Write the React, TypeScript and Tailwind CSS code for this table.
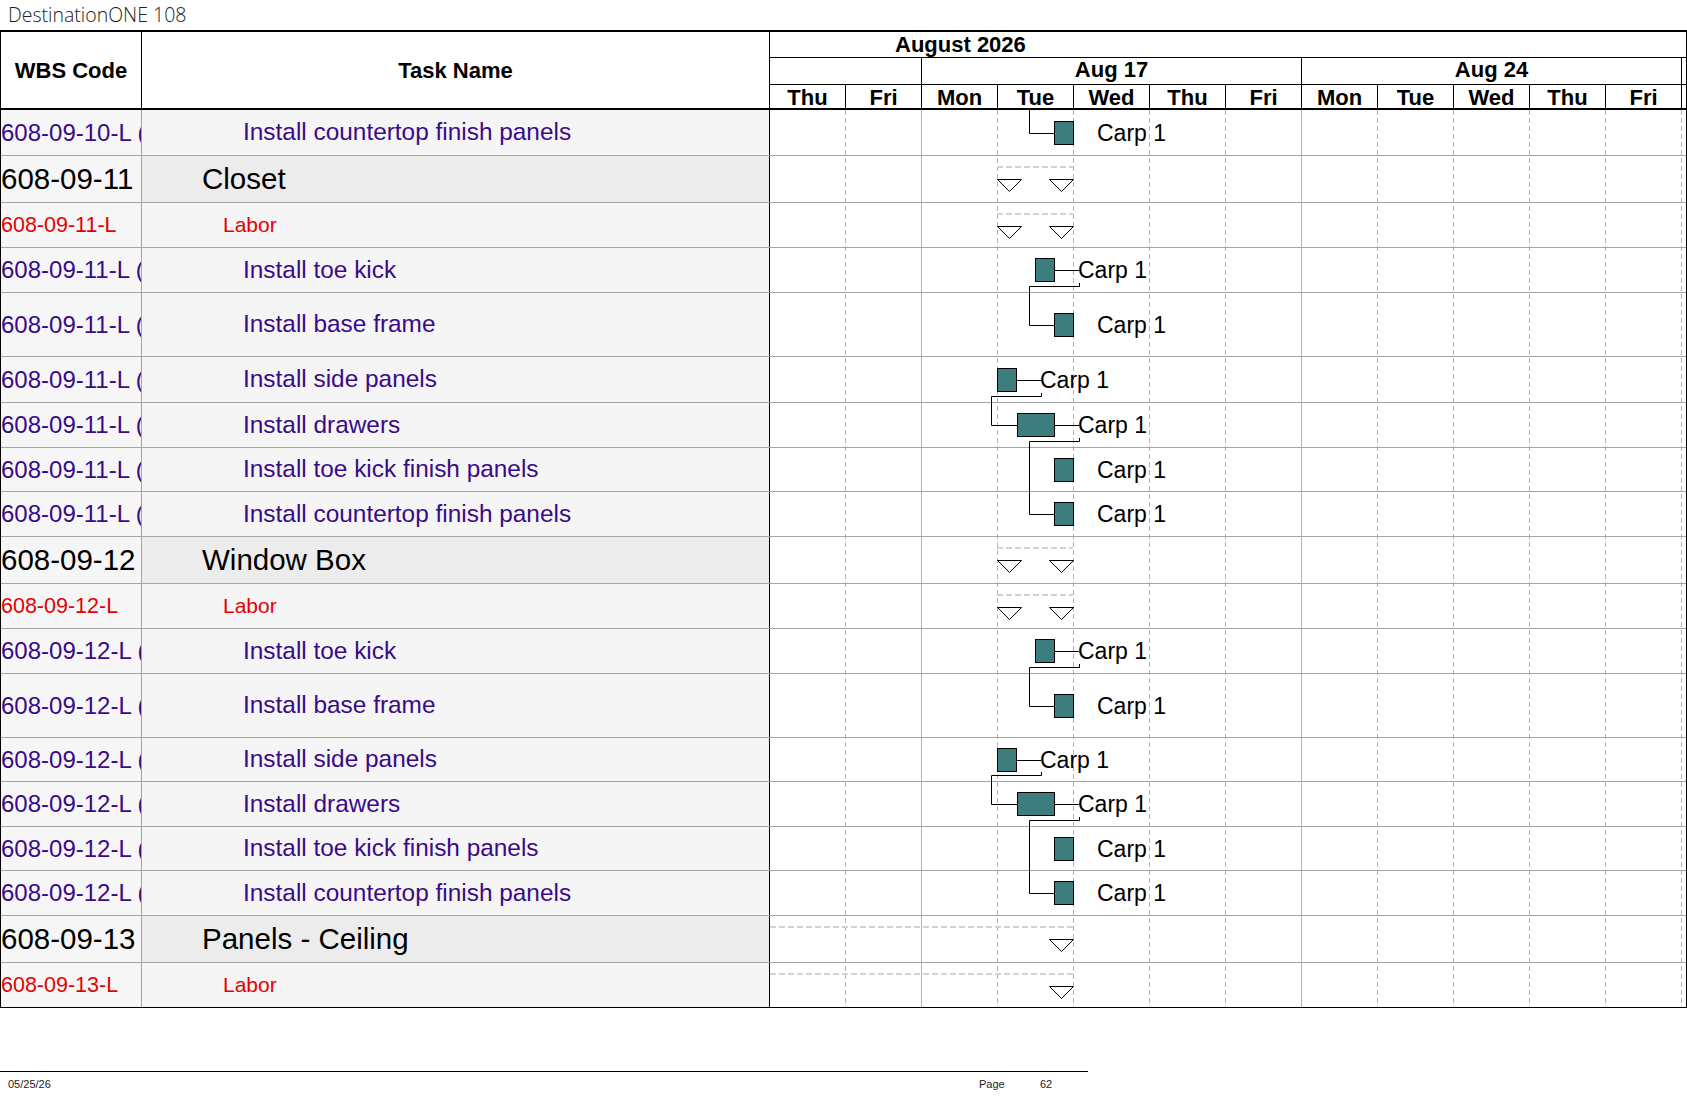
import React from 'react';

type Kind = 'task' | 'group' | 'labor';

type Chart =
  | { bar: [number, number]; label: number; lead?: number }
  | { tris: number[]; dash: [number, number] };

interface Row {
  wbs: string;
  name: string;
  kind: Kind;
  h: number;
  hCls: string;
  chart?: Chart;
}

// chart x values are in svg coordinates (page x - 770)
const LATE: Chart = { bar: [284, 303], label: 327 };
const TOE: Chart = { bar: [265, 284], label: 308, lead: 309 };
const SIDE: Chart = { bar: [227, 246], label: 270, lead: 271 };
const DRAW: Chart = { bar: [247, 284], label: 308, lead: 309 };
const SUM: Chart = { tris: [227, 279], dash: [227, 303] };
const SUM_WIDE: Chart = { tris: [279], dash: [0, 303] };

const rows: Row[] = [
  { wbs: '608-09-10-L (', name: 'Install countertop finish panels', kind: 'task', h: 46, hCls: 'h-[46px]', chart: LATE },
  { wbs: '608-09-11', name: 'Closet', kind: 'group', h: 47, hCls: 'h-[47px]', chart: SUM },
  { wbs: '608-09-11-L', name: 'Labor', kind: 'labor', h: 45, hCls: 'h-[45px]', chart: SUM },
  { wbs: '608-09-11-L (', name: 'Install toe kick', kind: 'task', h: 45, hCls: 'h-[45px]', chart: TOE },
  { wbs: '608-09-11-L (', name: 'Install base frame', kind: 'task', h: 64, hCls: 'h-[64px]', chart: LATE },
  { wbs: '608-09-11-L (', name: 'Install side panels', kind: 'task', h: 46, hCls: 'h-[46px]', chart: SIDE },
  { wbs: '608-09-11-L (', name: 'Install drawers', kind: 'task', h: 45, hCls: 'h-[45px]', chart: DRAW },
  { wbs: '608-09-11-L (', name: 'Install toe kick finish panels', kind: 'task', h: 44, hCls: 'h-[44px]', chart: LATE },
  { wbs: '608-09-11-L (', name: 'Install countertop finish panels', kind: 'task', h: 45, hCls: 'h-[45px]', chart: LATE },
  { wbs: '608-09-12', name: 'Window Box', kind: 'group', h: 47, hCls: 'h-[47px]', chart: SUM },
  { wbs: '608-09-12-L', name: 'Labor', kind: 'labor', h: 45, hCls: 'h-[45px]', chart: SUM },
  { wbs: '608-09-12-L (', name: 'Install toe kick', kind: 'task', h: 45, hCls: 'h-[45px]', chart: TOE },
  { wbs: '608-09-12-L (', name: 'Install base frame', kind: 'task', h: 64, hCls: 'h-[64px]', chart: LATE },
  { wbs: '608-09-12-L (', name: 'Install side panels', kind: 'task', h: 44, hCls: 'h-[44px]', chart: SIDE },
  { wbs: '608-09-12-L (', name: 'Install drawers', kind: 'task', h: 45, hCls: 'h-[45px]', chart: DRAW },
  { wbs: '608-09-12-L (', name: 'Install toe kick finish panels', kind: 'task', h: 44, hCls: 'h-[44px]', chart: LATE },
  { wbs: '608-09-12-L (', name: 'Install countertop finish panels', kind: 'task', h: 45, hCls: 'h-[45px]', chart: LATE },
  { wbs: '608-09-13', name: 'Panels - Ceiling', kind: 'group', h: 47, hCls: 'h-[47px]', chart: SUM_WIDE },
  { wbs: '608-09-13-L', name: 'Labor', kind: 'labor', h: 44, hCls: 'h-[44px]', chart: SUM_WIDE },
];

// dependency links: from row -> to row
const links = [
  { from: 3, to: 4, x: 259, end: 309, target: 284 },
  { from: 5, to: 6, x: 221, end: 271, target: 247 },
  { from: 6, to: 8, x: 259, end: 309, target: 284 },
  { from: 11, to: 12, x: 259, end: 309, target: 284 },
  { from: 13, to: 14, x: 221, end: 271, target: 247 },
  { from: 14, to: 16, x: 259, end: 309, target: 284 },
];

const days = ['Thu', 'Fri', 'Mon', 'Tue', 'Wed', 'Thu', 'Fri', 'Mon', 'Tue', 'Wed', 'Thu', 'Fri'];

const CHART_W = 916;
const CHART_H = rows.reduce((s, r) => s + r.h, 0);

const tops: number[] = [];
{
  let acc = 0;
  rows.forEach((r) => {
    tops.push(acc);
    acc += r.h;
  });
}
const inner = (i: number) => rows[i].h - (i === rows.length - 1 ? 0 : 1);
const mid = (i: number) => tops[i] + inner(i) / 2;

const nameCls: Record<Kind, string> = {
  task: 'bg-[#f5f5f5] pl-[101px] text-[24.4px] text-[#3a0a88]',
  group: 'bg-[#ececec] pl-[60px] text-[29.5px] text-black',
  labor: 'bg-[#f5f5f5] pl-[81px] text-[21px] text-[#e60000]',
};

const wbsCls: Record<Kind, string> = {
  task: 'text-[24px] text-[#3a0a88]',
  group: 'text-[29.5px] text-black',
  labor: 'text-[21.5px] text-[#e60000]',
};

function GanttBody() {
  return (
    <svg width={CHART_W} height={CHART_H} className="block shrink-0" fontFamily="'Liberation Sans', Arial, sans-serif">
      {/* day grid */}
      {days.map((_, k) => {
        const x = 75.5 + 76 * k;
        const solid = k === 1 || k === 6;
        return (
          <line
            key={k}
            x1={x}
            x2={x}
            y1={0}
            y2={CHART_H}
            stroke="#b4b4b4"
            strokeWidth={1}
            strokeDasharray={solid ? undefined : '5 3'}
          />
        );
      })}
      {/* row lines */}
      {rows.slice(0, -1).map((r, i) => {
        const y = tops[i] + r.h - 0.5;
        return <line key={i} x1={0} x2={CHART_W} y1={y} y2={y} stroke="#a4a4a4" strokeWidth={1} />;
      })}

      {/* links */}
      <path d={`M259.5 0 V${Math.round(mid(0)) + 0.5} H284`} fill="none" stroke="black" strokeWidth={1} />
      {links.map((l, i) => {
        const yOut = tops[l.from] + rows[l.from].h - 1 - 6;
        const yt = Math.round(mid(l.to));
        return (
          <path
            key={i}
            d={`M${l.end + 0.5} ${yOut - 3} V${yOut + 0.5} H${l.x + 0.5} V${yt + 0.5} H${l.target}`}
            fill="none"
            stroke="black"
            strokeWidth={1}
          />
        );
      })}

      {rows.map((r, i) => {
        const c = r.chart;
        if (!c) return null;
        if ('tris' in c) {
          const dy = tops[i] + 11;
          const ty = tops[i] + 23;
          return (
            <g key={i}>
              <line x1={c.dash[0]} x2={c.dash[1]} y1={dy} y2={dy} stroke="#d2d2d2" strokeWidth={2} strokeDasharray="6 3" />
              {c.tris.map((x) => (
                <polygon
                  key={x}
                  points={`${x + 0.5},${ty + 0.5} ${x + 24.5},${ty + 0.5} ${x + 12.5},${ty + 12.5}`}
                  fill="white"
                  stroke="black"
                  strokeWidth={1}
                />
              ))}
            </g>
          );
        }
        const m = mid(i);
        const yTop = Math.round(m - 12);
        const yc = Math.round(m) + 0.5;
        return (
          <g key={i}>
            {c.lead && <line x1={c.bar[1] + 1} x2={c.lead} y1={yc} y2={yc} stroke="black" strokeWidth={1} />}
            <rect
              x={c.bar[0] + 0.5}
              y={yTop + 0.5}
              width={c.bar[1] - c.bar[0]}
              height={23}
              fill="#3e7d7d"
              stroke="black"
              strokeWidth={1}
            />
            <text x={c.label} y={m + 8} fontSize={23} fill="black">
              Carp 1
            </text>
          </g>
        );
      })}
    </svg>
  );
}

export default function App() {
  return (
    <div className="w-[1687px] h-[1097px] bg-white font-['Liberation_Sans',Arial,sans-serif] text-black overflow-hidden">
      {/* Title */}
      <div className="h-[30px] pl-[8px] pt-[3px] font-['Open_Sans',sans-serif] font-light text-[19.5px] leading-[24px] text-[#222]">
        DestinationONE 108
      </div>

      {/* Table */}
      <div className="w-[1687px] border-t-2 border-l border-r border-b border-black">
        {/* Header */}
        <div className="flex h-[78px] border-b-2 border-black">
          <div className="w-[141px] shrink-0 border-r border-black flex items-center justify-center text-[22px] font-bold">
            WBS Code
          </div>
          <div className="w-[628px] shrink-0 border-r border-black flex items-center justify-center text-[22px] font-bold">
            Task Name
          </div>
          <div className="flex-1 flex flex-col text-[22px] font-bold">
            <div className="h-[26px] border-b border-black pl-[125px] leading-[25px]">August 2026</div>
            <div className="h-[27px] border-b border-black flex leading-[24px]">
              <div className="w-[152px] shrink-0 border-r border-black" />
              <div className="w-[380px] shrink-0 border-r border-black text-center">Aug 17</div>
              <div className="w-[380px] shrink-0 border-r border-black text-center">Aug 24</div>
              <div className="flex-1" />
            </div>
            <div className="h-[23px] flex leading-[26px]">
              {days.map((d, i) => (
                <div key={i} className="w-[76px] shrink-0 border-r border-black text-center overflow-visible">
                  {d}
                </div>
              ))}
              <div className="flex-1" />
            </div>
          </div>
        </div>

        {/* Body */}
        <div className="flex">
          <div className="w-[769px] shrink-0 flex flex-col">
            {rows.map((r, i) => (
              <div
                key={i}
                className={`flex ${r.hCls} ${i === rows.length - 1 ? '' : 'border-b border-[#a4a4a4]'}`}
              >
                <div className={`w-[141px] shrink-0 border-r border-[#a4a4a4] bg-[#f6f6f6] flex items-center overflow-hidden whitespace-nowrap ${wbsCls[r.kind]}`}>
                  {r.wbs}
                </div>
                <div className={`w-[628px] shrink-0 border-r border-black flex items-center whitespace-nowrap ${nameCls[r.kind]}`}>
                  {r.name}
                </div>
              </div>
            ))}
          </div>
          <GanttBody />
        </div>
      </div>

      {/* Footer */}
      <div className="mt-[63px] w-[1088px] border-t border-black" />
      <div className="flex pl-[8px] pt-[6px] text-[11px] leading-[13px] text-[#222]">
        <span className="w-[971px] shrink-0">05/25/26</span>
        <span className="w-[61px] shrink-0">Page</span>
        <span>62</span>
      </div>
    </div>
  );
}
